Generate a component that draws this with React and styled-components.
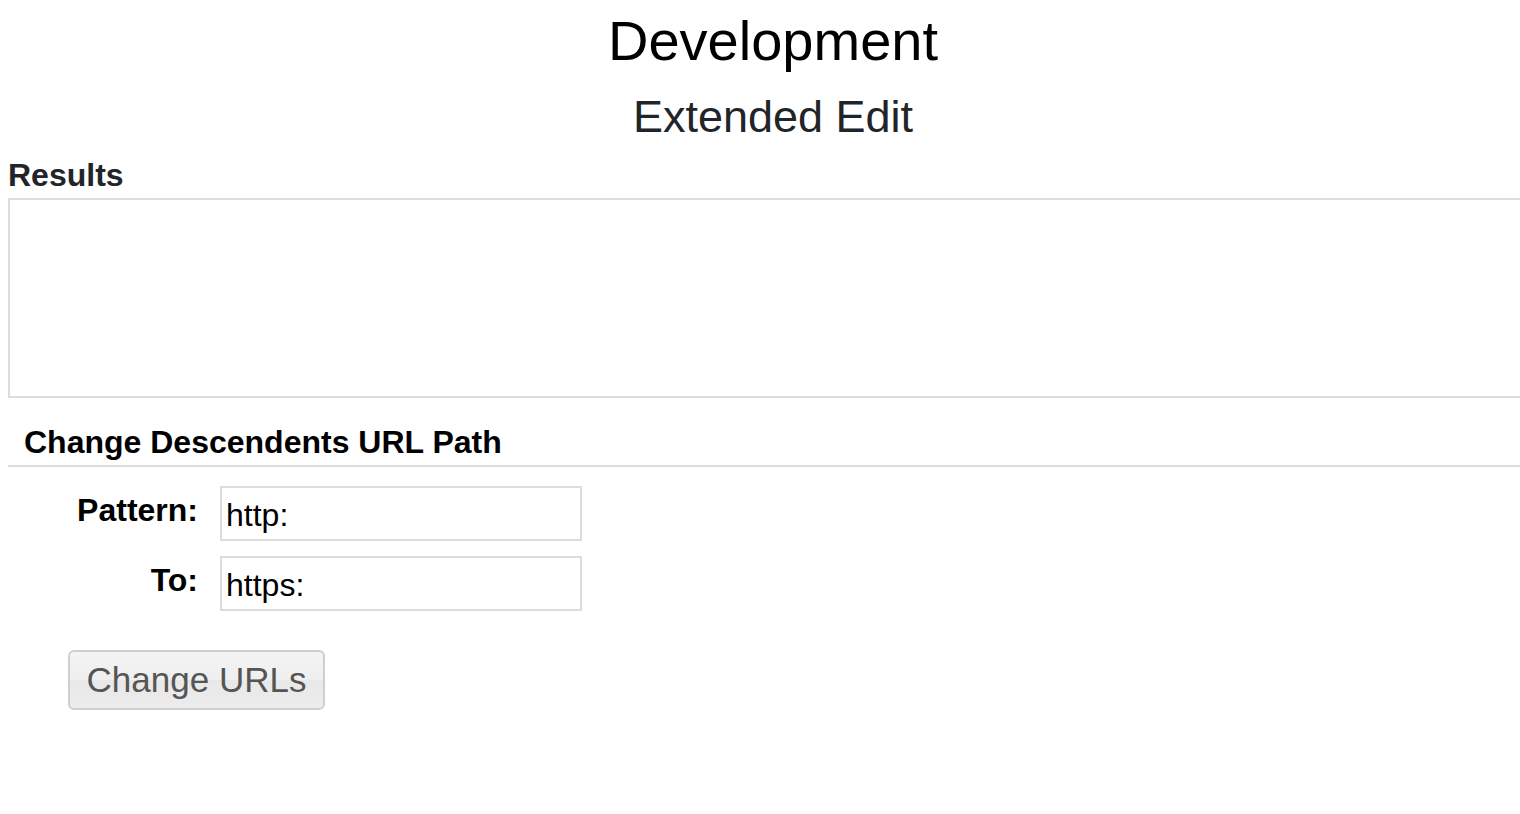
import React from "react";
import styled, { createGlobalStyle } from "styled-components";

const Global = createGlobalStyle`
  html { scrollbar-width: none; }
  html::-webkit-scrollbar { display: none; }
  body {
    margin: 8px 0 8px 8px;
    background: #fff;
    font-family: "Liberation Sans", Helvetica, Arial, sans-serif;
    color: #000;
  }
`;

const Page = styled.div`
  width: 1530px;
  display: flex;
  flex-direction: column;
`;

const Title = styled.h1`
  margin: 1px 0 0;
  font-size: 56px;
  line-height: 64px;
  font-weight: 400;
  text-align: center;
  color: #000;
`;

const Subtitle = styled.h2`
  margin: 18px 0 0;
  font-size: 45px;
  line-height: 52px;
  font-weight: 400;
  text-align: center;
  color: #212529;
`;

const SectionLabel = styled.div`
  margin-top: 14px;
  font-size: 32px;
  line-height: 36px;
  font-weight: 700;
  color: #212529;
`;

const ResultsBox = styled.div`
  margin-top: 5px;
  height: 200px;
  box-sizing: border-box;
  border: 2px solid #dcdcdc;
  background: #fff;
`;

const SectionHeader = styled.h3`
  margin: 26px 0 0;
  padding: 0 0 5px 16px;
  font-size: 32px;
  line-height: 36px;
  font-weight: 700;
  color: #000;
  border-bottom: 2px solid #dcdcdc;
`;

const Form = styled.div`
  margin-top: 19px;
  display: grid;
  grid-template-columns: 190px 362px;
  column-gap: 22px;
  row-gap: 15px;
  align-items: start;
`;

const Label = styled.label`
  padding-top: 6px;
  font-size: 32px;
  line-height: 36px;
  font-weight: 700;
  text-align: right;
  color: #000;
`;

const Input = styled.input`
  box-sizing: border-box;
  width: 362px;
  height: 55px;
  margin: 0;
  padding: 3px 4px 0;
  border: 2px solid #dcdcdc;
  border-radius: 0;
  outline: none;
  background: #fff;
  font-family: "Liberation Sans", Helvetica, Arial, sans-serif;
  font-size: 32px;
  color: #000;
`;

const Actions = styled.div`
  margin-top: 39px;
  padding-left: 60px;
  display: flex;
`;

const Button = styled.button`
  box-sizing: border-box;
  width: 257px;
  height: 60px;
  padding: 0;
  border: 2px solid #cfcfcf;
  border-radius: 6px;
  background: linear-gradient(#f4f4f4 0%, #efefef 50%, #e8e8e8 50%, #ececec 100%);
  font-family: "Liberation Sans", Helvetica, Arial, sans-serif;
  font-size: 35px;
  color: #555;
  cursor: pointer;
`;

export default function App() {
  return (
    <>
      <Global />
      <Page>
        <Title>Development</Title>
        <Subtitle>Extended Edit</Subtitle>
        <SectionLabel>Results</SectionLabel>
        <ResultsBox />
        <SectionHeader>Change Descendents URL Path</SectionHeader>
        <Form>
          <Label htmlFor="pattern">Pattern:</Label>
          <Input id="pattern" defaultValue="http:" />
          <Label htmlFor="to">To:</Label>
          <Input id="to" defaultValue="https:" />
        </Form>
        <Actions>
          <Button>Change URLs</Button>
        </Actions>
      </Page>
    </>
  );
}
